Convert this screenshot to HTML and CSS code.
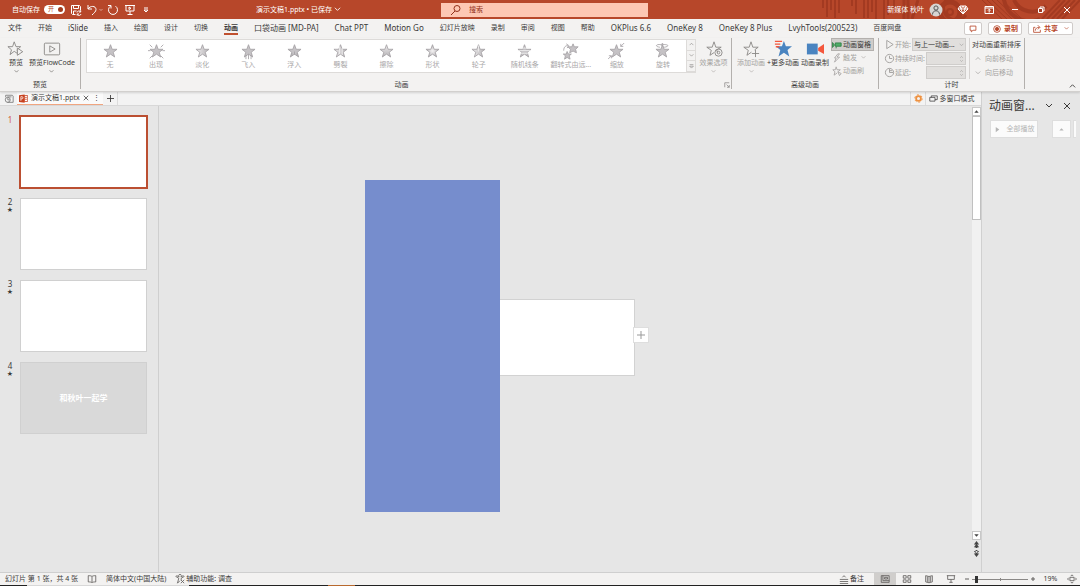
FILE: index.html
```html
<!DOCTYPE html>
<html lang="zh-CN">
<head>
<meta charset="utf-8">
<title>演示文稿1.pptx</title>
<link rel="stylesheet" href="styles.css">
</head>
<body>
<svg class="defs" aria-hidden="true">
  <defs>
    <linearGradient id="fade"><stop offset="0" stop-color="#eeeced"/><stop offset="1" stop-color="#b5b2b5"/></linearGradient>
    <linearGradient id="fadeDown" x2="0" y2="1"><stop offset="0" stop-color="#eeeced"/><stop offset="1" stop-color="#b5b2b5"/></linearGradient>
    <radialGradient id="glow"><stop offset="0" stop-color="#f4f2f3"/><stop offset="1" stop-color="#b9b6b9"/></radialGradient>
    <path id="star" d="M10 2l2 5.400h5.700l-4.500 3.500 1.700 5.600-4.900-3.400-4.900 3.400 1.700-5.600-4.500-3.500h5.700z"/>
    <path id="down" d="M1 2l3 3 3-3"/>
    <path id="up" d="M1 5l3-3 3 3"/>
  </defs>
</svg>

<header class="titlebar">
  <svg class="pattern" viewBox="0 0 260 19" preserveAspectRatio="xMaxYMin slice" aria-hidden="true">
    <g fill="none" stroke="#96331c" stroke-width="2">
      <path d="M3 0v8M7 0v17M11 0v10M15 0v18M19 0v13M32 0v6M36 0v14M44 0v18M48 0v18M52 0v12M56 0v19M64 0v19M68 0v15M74 0v8"/>
      <path d="M84 0v19M88 0v19M98 0l-6 19M126 0a12 12 0 0 0 20 15" stroke-width="3"/>
      <circle cx="130" cy="12" r="10" stroke-width="5"/><circle cx="130" cy="12" r="3"/>
      <path d="M162 0l20 19M167 0l20 19M172 0l20 19M177 0l20 19M182 0l20 19" stroke-width="1"/>
      <path d="M184 0a26 26 0 0 0 36 19M194 0a20 20 0 0 0 32 6" stroke-width="4"/>
      <path d="M222 19l18-19M227 19l18-19M232 19l18-19M237 19l18-19M242 19l18-19" stroke-width="2"/>
    </g>
  </svg>
  <div class="title-left">
    <label class="autosave">自动保存<span class="switch"><input type="checkbox" checked><span>开</span></span></label>
    <div class="quick">
      <button aria-label="保存"><svg viewBox="0 0 12 12"><path d="M1.500 1.500h8l1 1v4M1.500 1.500v8l1 1h3M3.500 1.500v3h5v-3M3.500 10V7h3M7 8.500a2 2 0 0 1 3.500-.8M11 10a2 2 0 0 1-3.500.7M10.700 6.500v1.500H9M7.200 11.500V10H9"/></svg></button>
      <button class="undo" aria-label="撤消"><svg viewBox="0 0 12 12"><path d="M2 1v4h4M2 5c2-3.500 8-3.500 8 .5 0 2-2 3.500-4 5.500"/></svg></button>
      <svg class="tiny" viewBox="0 0 8 8"><use href="#down"/></svg>
      <button class="redo" aria-label="重复"><svg viewBox="0 0 12 12"><path d="M8.500 2.200A4.500 4.500 0 1 1 3.500 2.200M1 1.500h3v3"/></svg></button>
      <button class="present" aria-label="从头开始"><svg viewBox="0 0 12 12"><path d="M1 1.500h10M2 1.500V7h8V1.500M6 7v3.500M3.500 10.500h5M5 3l2 1.300L5 5.500z"/></svg></button>
      <button class="more" aria-label="自定义快速访问工具栏"><svg viewBox="0 0 8 8"><path d="M2 2h4M2 4h4L4 6z"/></svg></button>
    </div>
    <button class="filename">演示文稿1.pptx • 已保存<svg viewBox="0 0 8 8"><use href="#down"/></svg></button>
  </div>
  <label class="search"><svg viewBox="0 0 12 12"><circle cx="7" cy="4.500" r="3"/><path d="M5 7l-4 4"/></svg><input type="search" placeholder="搜索" aria-label="搜索"></label>
  <div class="title-right">
    <button class="user">新媒体 秋叶<svg viewBox="0 0 14 14"><circle cx="7" cy="7" r="6.500" fill="#d8d5d3" stroke="none"/><circle cx="7" cy="5" r="2.100" stroke="#555"/><path d="M3.500 11.500c0-5 7-5 7 0" stroke="#555"/></svg></button>
    <button aria-label="高级版"><svg viewBox="0 0 12 12"><path d="M3 2h6l2 3-5 5-5-5zM1 5h10M4 5l2 5 2-5-2-3zM3 2l1 3M9 2L8 5"/></svg></button>
    <button aria-label="功能区显示选项"><svg viewBox="0 0 12 12"><path d="M2 2.500h8.500v7H2zM2 4h8.500M6.200 8.500V5.500M5 6.500l1.200-1.200 1.200 1.200"/></svg></button>
    <button aria-label="最小化"><svg viewBox="0 0 12 12"><path d="M3 5.500h6"/></svg></button>
    <button aria-label="向下还原"><svg viewBox="0 0 12 12"><path d="M3.500 4.500h4v4h-4zM5 4.500V3h4v4H7.500"/></svg></button>
    <button aria-label="关闭"><svg viewBox="0 0 12 12"><path d="M3 3l6 6M9 3l-6 6"/></svg></button>
  </div>
</header>

<nav class="tabs">
  <button>文件</button><button>开始</button><button class="latin">iSlide</button><button>插入</button><button>绘图</button><button>设计</button><button>切换</button><button class="active">动画</button><button class="latin">口袋动画 [MD-PA]</button><button class="latin">Chat PPT</button><button class="latin">Motion Go</button><button>幻灯片放映</button><button>录制</button><button>审阅</button><button>视图</button><button>帮助</button><button class="latin">OKPlus 6.6</button><button class="latin">OneKey 8</button><button class="latin">OneKey 8 Plus</button><button class="latin">LvyhTools(200523)</button><button>百度网盘</button>
  <div class="tab-actions">
    <button aria-label="批注"><svg viewBox="0 0 12 12"><path d="M2.500 2.500h7v5H6L4 9.500v-2H2.500z"/></svg></button>
    <button><svg viewBox="0 0 12 12"><circle cx="6" cy="6" r="4"/><circle cx="6" cy="6" r="2" fill="currentColor"/></svg>录制</button>
    <button><svg viewBox="0 0 12 12"><path d="M4 4H2v6h8V7M4 8c0-3 2-4 5-4M7 1.500L9.500 4 7 6.500"/></svg>共享<svg class="caret" viewBox="0 0 8 8"><use href="#down"/></svg></button>
  </div>
</nav>

<section class="ribbon">
  <div class="group preview">
    <div class="tools">
      <button class="big"><svg viewBox="0 0 20 20"><path d="M8 2l2 5.400h5.200l-4 3.500 1.200 4.600L8 12.600l-4.600 3.600L5 10.900 1 7.400h5.200z"/><path d="M11.500 9v8l6-4z" fill="#f3f2f1"/></svg>预览<svg class="caret" viewBox="0 0 8 8"><use href="#down"/></svg></button>
      <button class="big"><svg viewBox="0 0 20 20"><rect x="1.500" y="3.500" width="17" height="13" rx="1"/><path d="M7.500 6.500v7l6-3.500z"/></svg>预览FlowCode<svg class="caret" viewBox="0 0 8 8"><use href="#down"/></svg></button>
    </div>
    <h2>预览</h2>
  </div>

  <div class="group animation">
    <div class="tools">
      <div class="gallery">
        <div class="effects">
          <button><svg viewBox="0 0 20 20"><use href="#star"/></svg>无</button>
          <button><svg viewBox="0 0 20 20"><use href="#star"/><path d="M2 2l3 3M18 2l-3 3M0 9h3M20 9h-3M2 18l3-3M18 18l-3-3"/></svg>出现</button>
          <button><svg viewBox="0 0 20 20"><use href="#star" fill="url(#fade)"/></svg>淡化</button>
          <button><svg viewBox="0 0 20 20"><use href="#star"/><path d="M7 14v5M10 13v6M13 14v5"/></svg>飞入</button>
          <button><svg viewBox="0 0 20 20"><use href="#star"/><path d="M7 12v3M10 10v4M13 12v3"/></svg>浮入</button>
          <button><svg viewBox="0 0 20 20"><use href="#star" fill="url(#fade)"/><path d="M9 4v9M12 6v8" stroke="#f6f6f6"/></svg>劈裂</button>
          <button><svg viewBox="0 0 20 20"><use href="#star" fill="url(#fadeDown)"/></svg>擦除</button>
          <button><svg viewBox="0 0 20 20"><use href="#star" fill="url(#glow)"/></svg>形状</button>
          <button><svg viewBox="0 0 20 20"><use href="#star" fill="url(#fade)"/><path d="M10 10V3" stroke="#eee"/></svg>轮子</button>
          <button><svg viewBox="0 0 20 20"><use href="#star"/><path d="M5 6h10M3 9h14M5 12h10" stroke="#f4f4f4"/></svg>随机线条</button>
          <button><svg viewBox="0 0 20 20"><path d="M13 1l1.500 3.500H19l-3 3 1 4-4-2-4 2 1-4-3-3h4.500zM6 10l1.500 3H11l-2.500 2 1 4L6 17l-3 2 1-4-2.500-2H5z"/><path d="M2 9c0-5 3-6 5-6M5 1l3 2-2 3" fill="none"/></svg>翻转式由远...</button>
          <button><svg viewBox="0 0 20 20"><use href="#star"/><path d="M15 4l4-4M15 1v3h3M0 19l4-4M1 15h3v3" fill="none"/></svg>缩放</button>
          <button><svg viewBox="0 0 20 20"><use href="#star"/><path d="M7 5C0 4 3 1 8 2M12 5c7-1 5-4-3-3M11 0L8 2l3 2" fill="none"/></svg>旋转</button>
        </div>
        <div class="gallery-nav">
          <button aria-label="上一行"><svg viewBox="0 0 8 8"><use href="#up"/></svg></button>
          <button aria-label="下一行"><svg viewBox="0 0 8 8"><use href="#down"/></svg></button>
          <button aria-label="其他"><svg viewBox="0 0 8 8"><path d="M1 1h6M1 3.500h6l-3 3z"/></svg></button>
        </div>
      </div>
      <button class="big off"><svg viewBox="0 0 20 20"><path d="M10 2l2 6h6l-5 3 1 3M10 2L8 8H2l5 3.500L5.500 17l4.500-3"/><circle cx="15" cy="14" r="4"/><circle cx="15" cy="14" r="1.500"/></svg>效果选项<svg class="caret" viewBox="0 0 8 8"><use href="#down"/></svg></button>
    </div>
    <h2>动画</h2>
    <button class="launcher" aria-label="动画设置"><svg viewBox="0 0 8 8"><path d="M1 7V1h6M3.500 3.500L7 7M7 4v3H4"/></svg></button>
  </div>

  <div class="group advanced">
    <div class="tools">
      <button class="big off"><svg viewBox="0 0 20 20"><path d="M10 2l2 6h6l-4 3M10 2L8 8H2l5 3.500L5.500 17l5-3.500M15 11v8M11 15h8"/></svg>添加动画<svg class="caret" viewBox="0 0 8 8"><use href="#down"/></svg></button>
      <button class="big"><svg viewBox="0 0 20 20"><path d="M11 1l2.200 6H20l-5 4.200 2 7-6-4-6 4 2-7L2 7h6.800z" fill="#4a84c0" stroke="none"/><path d="M1 1.500h8M1 4.500h6M2 7.500h4" stroke="#f4573c" stroke-width="1.500"/></svg>+更多动画</button>
      <button class="big"><svg viewBox="0 0 20 20"><path d="M1 4h12v12H1z" fill="#4a84c0" stroke="none"/><path d="M13.500 9L20 4.500v11L13.500 12z" fill="#f4573c" stroke="none"/></svg>动画录制</button>
      <div class="stack">
        <button class="pressed"><svg viewBox="0 0 12 12"><path d="M0.500 3v6l2.500-3z" fill="#4fae68" stroke="#2c7d43"/><path d="M4 3.500h7v4H4zM5 7.500v2.500" fill="#4fae68" stroke="#2c7d43"/></svg>动画窗格</button>
        <button class="off"><svg viewBox="0 0 12 12"><path d="M7 1L3 6h2l-2 5 6-6H6l3-4z"/></svg>触发<svg class="caret" viewBox="0 0 8 8"><use href="#down"/></svg></button>
        <button class="off"><svg viewBox="0 0 12 12"><path d="M5 1l1 3.500h4L7 7M5 1L4 4.500H1L3.500 7l-1 4L6 8.500M7 7l4 2-2 2.500z"/></svg>动画刷</button>
      </div>
    </div>
    <h2>高级动画</h2>
  </div>

  <div class="group timing">
    <div class="tools">
      <div class="fields">
        <label><svg viewBox="0 0 12 12"><path d="M3 1.500v9L10 6z"/></svg>开始:<select class="start"><option>与上一动画...</option></select><svg class="caret" viewBox="0 0 8 8"><use href="#down"/></svg></label>
        <label><svg viewBox="0 0 12 12"><circle cx="6" cy="6" r="4.500"/><path d="M6 3v3h3"/></svg>持续时间:<input type="text" disabled><svg class="caret" viewBox="0 0 8 12"><path d="M2 4l2-2 2 2M2 8l2 2 2-2"/></svg></label>
        <label><svg viewBox="0 0 12 12"><circle cx="6" cy="6" r="4.500"/><path d="M6 2v4h4M6 4h3"/></svg>延迟:<input type="text" disabled><svg class="caret" viewBox="0 0 8 12"><path d="M2 4l2-2 2 2M2 8l2 2 2-2"/></svg></label>
      </div>
      <div class="reorder">
        <h3>对动画重新排序</h3>
        <button class="off"><svg viewBox="0 0 8 8"><use href="#up"/></svg>向前移动</button>
        <button class="off"><svg viewBox="0 0 8 8"><use href="#down"/></svg>向后移动</button>
      </div>
    </div>
    <h2>计时</h2>
  </div>
  <button class="collapse" aria-label="折叠功能区"><svg viewBox="0 0 8 8"><use href="#up"/></svg></button>
</section>

<main class="body">
  <div class="document">
    <div class="doc-tabs">
      <button class="recent" aria-label="最近文件"><svg viewBox="0 0 12 12"><path d="M2 4V1.500h8l1 1V10H4M4 3.500h5"/><circle cx="4.500" cy="7" r="3"/><path d="M4.500 5v2H7"/></svg></button>
      <div class="doc-tab">
        <svg class="ppt" viewBox="0 0 12 12"><path d="M7 2h4.500v8H7z" fill="#fff" stroke="#c43e1c"/><path d="M8 4.500h2.500M8 7h2.500" stroke="#c43e1c"/><path d="M0 1.500L7.500.5v11L0 10.500z" fill="#c8401e" stroke="none"/><path d="M2.500 9V3.500h1.300a1.500 1.500 0 0 1 0 3H2.500" stroke="#fff"/></svg>
        <span>演示文稿1.pptx</span>
        <button aria-label="关闭文档"><svg viewBox="0 0 8 8"><path d="M1 1l6 6M7 1L1 7"/></svg></button>
        <button class="dots" aria-label="更多">⋮</button>
      </div>
      <button class="new" aria-label="新建"><svg viewBox="0 0 8 8"><path d="M4 0v8M0 4h8"/></svg></button>
      <div class="doc-right">
        <button class="gear" aria-label="设置"><svg viewBox="0 0 12 12"><circle cx="6" cy="6" r="3.200" stroke="#ee9140" stroke-width="2.400"/><circle cx="6" cy="6" r="5" stroke="#ee9140" stroke-width="1.200" stroke-dasharray="2.600 2.600"/></svg></button>
        <button class="multi"><svg viewBox="0 0 12 12"><path d="M1 4.500h7v5H1zM3 4.500v-2h8v5H8"/></svg>多窗口模式</button>
      </div>
    </div>
    <div class="workspace">
      <aside class="thumbs">
        <div class="thumb selected"><span class="num">1</span><button class="page" aria-label="幻灯片 1"></button></div>
        <div class="thumb"><span class="num">2<small>★</small></span><button class="page" aria-label="幻灯片 2"></button></div>
        <div class="thumb"><span class="num">3<small>★</small></span><button class="page" aria-label="幻灯片 3"></button></div>
        <div class="thumb"><span class="num">4<small>★</small></span><button class="page dim">和秋叶一起学</button></div>
      </aside>
      <div class="canvas">
        <div class="slide">
          <div class="shape"></div>
          <button class="add" aria-label="添加"><svg viewBox="0 0 8 8"><path d="M4 0v8M0 4h8"/></svg></button>
        </div>
      </div>
      <div class="scrollbar">
        <button aria-label="向上滚动"><svg viewBox="0 0 8 8"><path d="M1.500 5.500L4 2.500l2.500 3z"/></svg></button>
        <div class="track"><div class="grip"></div></div>
        <button aria-label="向下滚动"><svg viewBox="0 0 8 8"><path d="M1.500 2.500L4 5.500l2.500-3z"/></svg></button>
        <button class="jump" aria-label="上一张"><svg viewBox="0 0 8 8"><path d="M1 4l3-4 3 4zM1 7l3-4 3 4zM3 5h2v3H3z"/></svg></button>
        <button class="jump" aria-label="下一张"><svg viewBox="0 0 8 8"><path d="M1 1l3 4 3-4zM1 4l3 4 3-4zM3 0h2v3H3z"/></svg></button>
      </div>
    </div>
  </div>
  <aside class="pane">
    <div class="pane-head"><h2>动画窗...</h2><button aria-label="选项"><svg viewBox="0 0 8 8"><use href="#down"/></svg></button><button aria-label="关闭窗格"><svg viewBox="0 0 8 8"><path d="M1 1l6 6M7 1L1 7"/></svg></button></div>
    <div class="pane-tools"><button class="play"><svg viewBox="0 0 8 8"><path d="M2 1v6l4-3z"/></svg>全部播放</button><button class="move" aria-label="上移"><svg viewBox="0 0 8 8"><path d="M1.500 5L4 2.500 6.500 5z"/></svg></button><button class="rest" aria-label="下移"></button></div>
  </aside>
</main>

<footer class="status">
  <span>幻灯片 第 1 张，共 4 张</span>
  <button aria-label="拼写检查"><svg viewBox="0 0 12 12"><path d="M6 3C5 2 3 2 1.500 2v7.500c2 0 3.500 0 4.500 1 1-1 2.500-1 4.500-1V2C9 2 7 2 6 3v7"/></svg></button>
  <button>简体中文(中国大陆)</button>
  <button class="access"><svg viewBox="0 0 12 12"><path d="M5 3a1.500 1.500 0 1 1 2 0M1 3l3.500 2L3 11l3-3M11 3L7.500 5v2M1 3l1-1 3 1.500M11 3l-1-1-3 1.500M7 7l4 4M11 7l-4 4"/></svg>辅助功能: 调查</button>
  <div class="views">
    <button class="notes"><svg viewBox="0 0 12 12"><path d="M1 6.500h10M1 9h10M1 11.500h10M4 4l2-2 2 2"/></svg>备注</button>
    <button class="view on" aria-label="普通视图"><svg viewBox="0 0 12 12"><path d="M1.500 2h9.500v8H1.500zM3.500 2v6M3.500 8H11M5.500 4h3.500v2H5.500z"/></svg></button>
    <button class="view" aria-label="幻灯片浏览"><svg viewBox="0 0 12 12"><path d="M1.500 2h3.500v3H1.500zM7 2h3.500v3H7zM1.500 7h3.500v3H1.500zM7 7h3.500v3H7z"/></svg></button>
    <button class="view" aria-label="阅读视图"><svg viewBox="0 0 12 12"><path d="M6 3L2 2v7.500l4 1 4-1V2zM6 3v7M4 3v6.500M8 3v6.500"/></svg></button>
    <button class="view" aria-label="幻灯片放映"><svg viewBox="0 0 12 12"><path d="M1 2h10M2 2v4.500h8V2M6 6.500V10M4 10h4"/></svg></button>
    <button class="sign" aria-label="缩小"><svg viewBox="0 0 8 8"><path d="M2 4h4"/></svg></button>
    <input class="zoom" type="range" min="0" max="100" value="5" aria-label="显示比例">
    <button class="sign" aria-label="放大"><svg viewBox="0 0 8 8"><path d="M2 4h4M4 2v4"/></svg></button>
    <button class="percent">19%</button>
    <button class="fit" aria-label="适应窗口"><svg viewBox="0 0 12 12"><path d="M3.500 4h5v4h-5zM4.500 2.500L6 1l1.500 1.500M4.500 9.500L6 11l1.500-1.500M2 4.500L.7 6 2 7.500M10 4.500L11.300 6 10 7.500"/></svg></button>
  </div>
</footer>
<div class="taskbar-edge"></div>
</body>
</html>
```
FILE: styles.css
```css
* { box-sizing: border-box; }
body {
  margin: 0;
  min-height: 100vh;
  display: flex;
  flex-direction: column;
  background: #f3f2f1;
  color: #3b3a39;
  font: 7px/10px "Noto Sans", "Noto Sans CJK SC", sans-serif;
  white-space: nowrap;
  overflow: hidden;
}
button, input, select { font: inherit; color: inherit; background: none; border: 0; padding: 0; margin: 0; border-radius: 0; }
button { display: flex; align-items: center; justify-content: center; white-space: nowrap; }
h2, h3 { font: inherit; margin: 0; }
svg { width: 12px; height: 12px; fill: none; stroke: currentColor; stroke-width: 1; flex: none; }
.defs { position: absolute; width: 0; height: 0; }
.caret { width: 5px; height: 5px; }

/* Title bar */
.titlebar { position: relative; height: 19px; display: grid; grid-template-columns: 441fr 207fr 432fr; align-items: center; background: #b7472a; color: #fff; }
.titlebar .pattern { position: absolute; right: 0; top: 0; width: 260px; height: 19px; opacity: .6; }
.title-left, .title-right, .quick, .autosave { display: flex; align-items: center; }
.title-left { padding-left: 12px; }
.autosave { gap: 4px; }
.switch { position: relative; width: 21px; height: 9px; border-radius: 5px; background: #fff; color: #b7472a; }
.switch input { appearance: none; position: absolute; right: 2px; top: 2px; width: 5px; height: 5px; border-radius: 50%; background: #a33c20; }
.switch span { display: block; padding-left: 4px; font-size: 6px; line-height: 9px; }
.quick { padding-left: 5px; gap: 4px; }
.quick .tiny { width: 4px; height: 4px; margin-left: -3px; }
.quick .more svg { width: 8px; height: 8px; }
.quick .present { margin-left: 1px; }
.quick .more { margin-left: 2px; }
.filename { margin-left: auto; margin-right: 100px; gap: 2px; }
.filename svg { width: 7px; height: 7px; }
.search { position: relative; display: flex; align-items: center; gap: 7px; height: 14px; padding-left: 9px; background: #fdc7b3; color: #93301a; }
.search input { flex: 1; min-width: 0; outline: 0; }
.search input::placeholder { color: #93301a; opacity: 1; }
.title-right { position: relative; justify-content: flex-end; gap: 14px; padding-right: 7px; }
.user { gap: 5px; }
.user svg { width: 14px; height: 14px; }

/* Ribbon tabs */
.tabs { height: 19px; display: flex; align-items: stretch; gap: 16px; padding: 0 7px 0 8px; }
.tabs > button { border-bottom: 2px solid transparent; margin-bottom: 3px; padding-top: 4px; }
.tabs > .latin { font-size: 8px; }
.tabs > .active { border-color: #c0502f; font-weight: 700; }
.tab-actions { display: flex; align-items: center; gap: 6px; margin-left: auto; color: #b7472a; font-weight: 700; }
.tab-actions button { height: 13px; padding: 0 3px; gap: 2px; border: 1px solid #cfcbc9; border-radius: 2px; background: #fff; }
.tab-actions svg { width: 10px; height: 10px; }
.tab-actions .caret { width: 5px; height: 5px; margin-left: 4px; }

/* Ribbon */
.ribbon { position: relative; z-index: 1; height: 54px; display: flex; border-bottom: 1px solid #d2d0ce; box-shadow: 0 1px 2px #0002; }
.group { position: relative; display: flex; flex-direction: column; justify-content: space-between; border-right: 1px solid #b3b0ad; margin-bottom: 2px; }
.group h2 { text-align: center; line-height: 9px; }
.tools { display: flex; }
.preview { width: 81px; }
.preview .tools { padding-left: 6px; gap: 3px; }
.animation { flex: 1; border: 0; }
.animation h2 { padding-right: 9px; }
.advanced { width: 148px; border-left: 1px solid #b3b0ad; }
.timing { width: 146px; margin-right: 55px; }
.big { flex-direction: column; justify-content: flex-start; padding-top: 2px; min-width: 20px; color: #3b3a39; }
.big svg { width: 18px; height: 18px; color: #8a8886; }
.big .caret { width: 5px; height: 5px; margin-top: 1px; color: #605e5c; }
.off, .big.off, .off svg.caret { color: #a6a4a2; }
.gallery { flex: 1; display: flex; margin: 1px 0 0 5px; border: 1px solid #dddbd9; background: #fff; height: 34px; }
.effects { flex: 1; display: grid; grid-template-columns: repeat(13, 1fr); }
.effects button { flex-direction: column; justify-content: flex-start; padding-top: 3px; color: #aaa8a9; }
.effects svg { width: 17px; height: 17px; fill: #c5c2c5; stroke: #a5a2a5; stroke-width: 1; }
.gallery-nav { width: 9px; display: grid; grid-template-rows: repeat(3, 1fr); background: #f3f2f1; color: #8a8886; }
.gallery-nav button { border: 1px solid #dddbd9; border-width: 0 0 1px 1px; }
.gallery-nav svg { width: 5px; height: 5px; }
.animation .big { width: 35px; }
.launcher { position: absolute; right: 1px; bottom: 1px; color: #8a8886; }
.launcher svg { width: 6px; height: 6px; }
.advanced .tools { padding-left: 3px; }
.advanced .big { width: 32px; }
.stack { display: grid; grid-template-rows: repeat(3, 13px); }
.stack button { justify-content: flex-start; gap: 1px; padding: 0 2px 0 1px; }
.stack svg { width: 10px; height: 10px; }
.stack .caret { width: 5px; height: 5px; margin-left: 3px; }
.stack .pressed { background: #cfcdcb; border: 1px solid #b3b0ad; padding-left: 0; }
.timing .tools { padding-left: 5px; gap: 2px; }
.fields { width: 86px; display: grid; grid-template-rows: repeat(3, 13px); row-gap: 1px; border-right: 1px solid #d6d3d1; padding-right: 3px; }
.fields label { display: flex; align-items: center; position: relative; color: #a19f9d; }
.fields > label > svg { width: 11px; height: 11px; }
.fields select, .fields input { appearance: none; margin-left: auto; height: 13px; background: #e1dfdd; border: 1px solid #cfcdcb; }
.fields select { width: 54px; padding-left: 1px; color: #3b3a39; }
.fields input { width: 40px; }
.fields svg.caret { position: absolute; right: 2px; width: 5px; height: 8px; }
.reorder { display: grid; grid-template-rows: repeat(3, 13px); row-gap: 1px; align-items: center; }
.reorder button { justify-content: flex-start; gap: 4px; padding-left: 3px; }
.reorder svg { width: 6px; height: 6px; }
.collapse { position: absolute; right: 4px; bottom: 1px; }
.collapse svg { width: 7px; height: 7px; }

/* Document area */
.body { flex: 1; display: flex; min-height: 0; background: #e6e6e6; }
.document { flex: 1; display: flex; flex-direction: column; border-right: 1px solid #d0d0d0; }
.doc-tabs { height: 14px; display: flex; background: #f3f3f3; border-bottom: 1px solid #d8d8d8; }
.recent { width: 17px; color: #777; }
.recent svg { width: 10px; height: 10px; }
.doc-tab { width: 86px; display: flex; align-items: center; gap: 3px; padding-left: 2px; border-bottom: 1px solid #f0a580; background: #fafafa; }
.doc-tab .ppt { width: 9px; height: 9px; }
.doc-tab button svg { width: 6px; height: 6px; }
.dots { margin-left: auto; padding-right: 3px; }
.new { width: 15px; border-right: 1px solid #dcdcdc; }
.new svg { width: 7px; height: 7px; }
.doc-right { display: flex; margin-left: auto; }
.gear { width: 16px; border: 1px solid #dcdcdc; border-width: 0 1px; }
.gear svg, .multi svg { width: 9px; height: 9px; }
.multi { width: 55px; gap: 2px; padding-right: 4px; }
.workspace { flex: 1; display: flex; min-height: 0; }
.thumbs { width: 159px; padding: 9px 10px 0 6px; border-right: 1px solid #cfcfcf; display: flex; flex-direction: column; gap: 8px; }
.thumb { display: flex; justify-content: space-between; }
.num { width: 8px; text-align: center; font-size: 8px; line-height: 9px; display: flex; flex-direction: column; }
.num small { font-size: 7px; line-height: 8px; font-family: "DejaVu Sans", sans-serif; }
.page { width: 129px; height: 74px; background: #fff; background-clip: padding-box; border: 2px solid #e6e6e6; outline: 1px solid #d0d0d0; outline-offset: -2px; }
.selected .page { border-color: #bb4f32; outline: 0; }
.selected .num { color: #d35e41; }
.page.dim { background-color: #d9d9d9; color: #fff; font-size: 8px; font-weight: 700; }
.canvas { flex: 1; display: flex; align-items: center; justify-content: center; padding: 0 0 3px 2px; }
.slide { position: relative; width: 136px; height: 77px; background: #fff; border: 1px solid #d2d2d2; }
.shape { position: absolute; right: 100%; top: -120px; width: 135px; height: 332px; background: #768dcd; }
.add { position: absolute; right: -15px; top: 27px; width: 16px; height: 16px; background: #fff; border: 1px solid #dedede; color: #999; }
.add svg { width: 8px; height: 8px; }
.scrollbar { width: 9px; padding: 1px 0 14px; display: flex; flex-direction: column; }
.scrollbar button { height: 9px; background: #fff; border: 1px solid #c8c8c8; }
.scrollbar svg { width: 7px; height: 7px; fill: #444; stroke: none; }
.scrollbar .jump { background: none; border: 0; }
.track { flex: 1; background: #f1f1f1; }
.grip { height: 104px; background: #fff; border: 1px solid #c0c0c0; }
.pane { width: 98px; padding: 6px 4px 0 7px; }
.pane-head { display: flex; align-items: center; height: 16px; gap: 10px; }
.pane-head h2 { font-size: 12px; line-height: 16px; margin-right: auto; }
.pane-head svg { width: 8px; height: 8px; }
.pane-head button:last-child { margin-right: 5px; }
.pane-tools { display: flex; height: 18px; margin-top: 6px; padding-left: 1px; color: #b5b5b5; }
.pane-tools button { background: #fbfbfb; border: 1px solid #dedede; }
.pane-tools svg { width: 7px; height: 7px; fill: currentColor; stroke: none; }
.play { width: 48px; gap: 6px; }
.move { width: 19px; margin-left: 14px; }
.pane-tools .rest { width: 3px; margin-left: 2px; border-right: 0; }

/* Status bar */
.status { height: 13px; display: flex; align-items: center; gap: 9px; padding-left: 5px; border-top: 1px solid #cfcfcf; }
.status button { gap: 1px; }
.status svg { width: 10px; height: 10px; color: #605e5c; }
.views { display: flex; align-items: center; align-self: stretch; margin-left: auto; }
.notes { margin-right: 10px; }
.view { width: 22px; align-self: stretch; }
.view.on { background: #d0cecc; }
.sign { width: 10px; }
.status .sign svg { width: 8px; height: 8px; }
.zoom { appearance: none; width: 56px; height: 9px; background: linear-gradient(#8a8886, #8a8886) center / 100% 1px no-repeat, linear-gradient(#8a8886, #8a8886) center / 1px 3px no-repeat; }
.zoom::-webkit-slider-thumb { appearance: none; width: 3px; height: 7px; background: #333; }
.percent { width: 25px; }
.fit { width: 17px; }
.taskbar-edge { height: 1px; background: linear-gradient(90deg, #222 27px, #d8d8d8 27px 189px, #222 189px 328px, #b8692e 328px 355px, #222 355px); }
```
